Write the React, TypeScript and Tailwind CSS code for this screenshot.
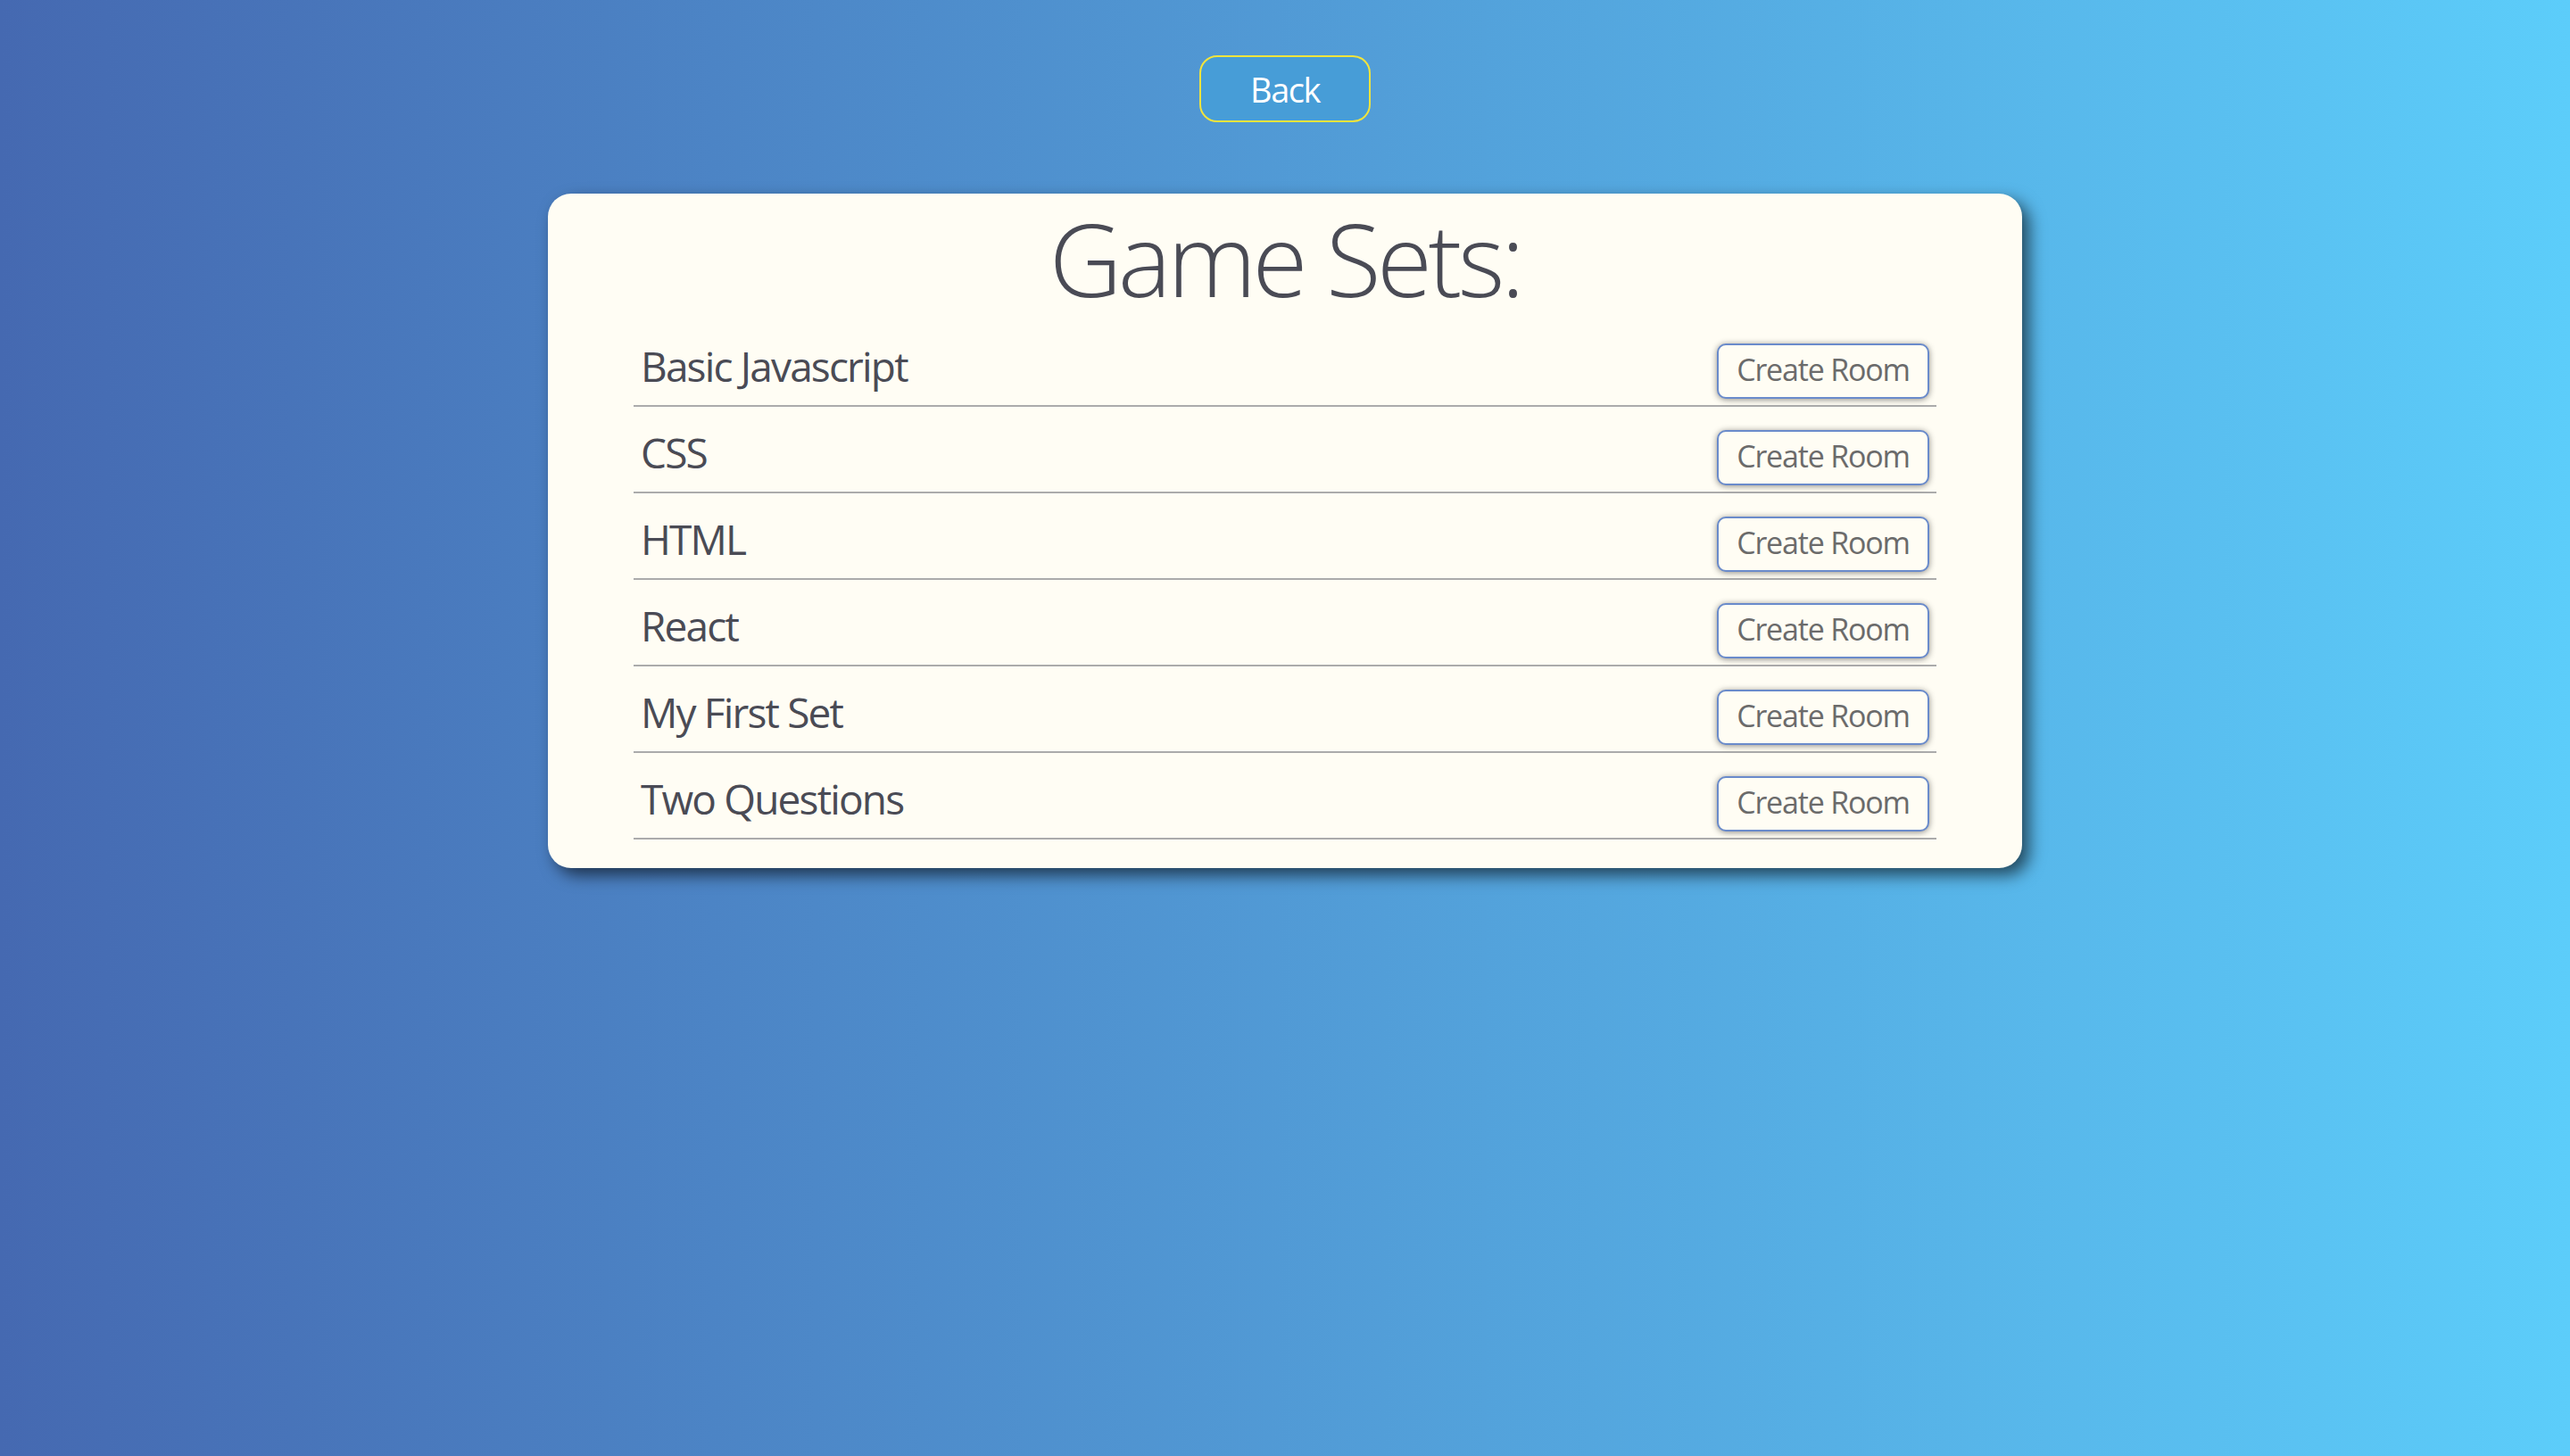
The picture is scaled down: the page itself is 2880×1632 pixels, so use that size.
import React from "react";

const gameSets = ["Basic Javascript", "CSS", "HTML", "React", "My First Set", "Two Questions"];

function SetRow({ name }: { name: string }) {
  return (
    <li className="flex h-[97px] items-end justify-between border-b-2 border-[#ababab] pl-[8px] pr-[8px] pb-[7px]">
      <span className="mb-[14px] text-[46px] leading-none tracking-[-0.04em] text-[#4a4b55]">{name}</span>
      <button className="flex h-[62px] w-[238px] items-center justify-center rounded-[10px] border-2 border-[#6a8bcb] bg-[#fffdf4] pb-[4px] text-[34px] leading-none tracking-[-0.035em] text-[#6b6b6b] shadow-[0_1px_7px_rgba(0,0,0,0.45)]">
        Create Room
      </button>
    </li>
  );
}

export default function App() {
  return (
    <div
      className="flex min-h-[1632px] w-full flex-col items-center bg-gradient-to-r from-[#4569b1] to-[#5ccdfa] pt-[62px]"
      style={{ fontFamily: '"Open Sans", "Noto Sans", sans-serif' }}
    >
      <button className="flex h-[75px] w-[192px] items-center justify-center rounded-[20px] border-2 border-[#f2e43c] bg-[#479dd7] text-[38px] leading-none tracking-[-0.04em] text-white">
        Back
      </button>

      <section className="mt-[80px] w-[1652px] rounded-[26px] bg-[#fffdf4] px-[96px] pt-[16px] pb-[32px] shadow-[8px_8px_18px_rgba(0,0,0,0.6)]">
        <h1 className="mb-[13px] text-center text-[113px] font-light leading-none tracking-[-0.04em] text-[#4a4b55]">
          Game Sets:
        </h1>
        <ul>
          {gameSets.map((name) => (
            <SetRow key={name} name={name} />
          ))}
        </ul>
      </section>
    </div>
  );
}
